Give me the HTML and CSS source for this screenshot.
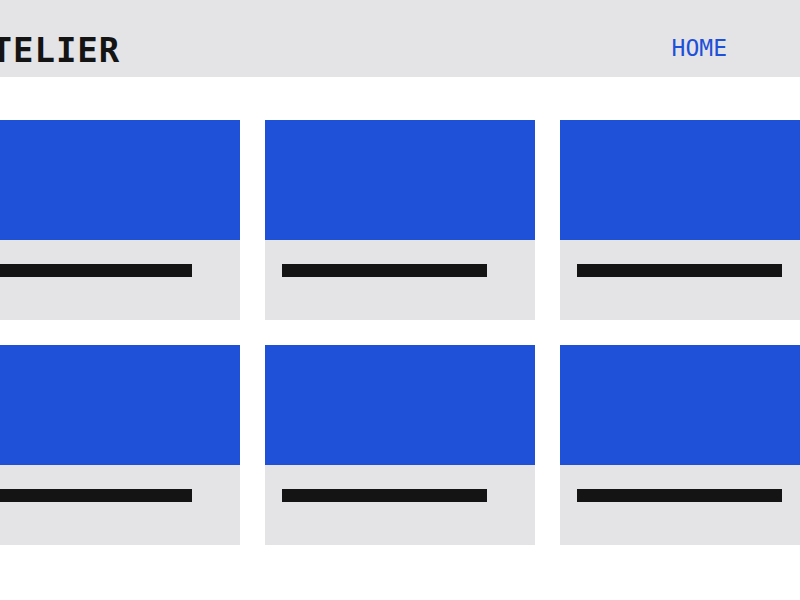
FILE: index.html
```html
<!DOCTYPE html>
<html>
<head>
  <title>Atelier</title>
  <link rel="stylesheet" href="styles.css">
</head>
<body>
  <header class="site-header">
    <div class="header-inner">
      <span class="logo">ATELIER</span>
      <nav class="nav">
        <a class="nav-link" href="#">HOME</a>
      </nav>
    </div>
  </header>

  <main class="gallery">
    <div class="grid">
      <div class="card"><div class="card-image"></div><div class="card-body"><div class="card-title"></div></div></div>
      <div class="card"><div class="card-image"></div><div class="card-body"><div class="card-title"></div></div></div>
      <div class="card"><div class="card-image"></div><div class="card-body"><div class="card-title"></div></div></div>
      <div class="card"><div class="card-image"></div><div class="card-body"><div class="card-title"></div></div></div>
      <div class="card"><div class="card-image"></div><div class="card-body"><div class="card-title"></div></div></div>
      <div class="card"><div class="card-image"></div><div class="card-body"><div class="card-title"></div></div></div>
    </div>
  </main>
</body>
</html>
```

FILE: styles.css
```css
body {
  margin: 0;
  background-color: #ffffff;
  font-family: "DejaVu Sans Mono", monospace;
  overflow: hidden;
}

.site-header {
  height: 77px;
  box-sizing: border-box;
  padding-top: 33px;
  background-color: #e4e4e6;
  display: flex;
  justify-content: center;
}

.header-inner {
  width: 860px;
  flex-shrink: 0;
  display: flex;
  justify-content: space-between;
  align-items: flex-start;
}

.logo {
  font-size: 34px;
  line-height: 34px;
  font-weight: bold;
  letter-spacing: 1px;
  color: #141414;
}

.nav {
  margin-top: 4px;
  margin-right: 103px;
}

.nav-link {
  font-size: 23px;
  line-height: 23px;
  color: #1f50d8;
  text-decoration: none;
}

.gallery {
  padding-top: 43px;
  display: flex;
  justify-content: center;
}

.grid {
  flex-shrink: 0;
  display: grid;
  grid-template-columns: repeat(3, 270px);
  gap: 25px;
}

.card {
  background-color: #e4e4e6;
}

.card-image {
  height: 120px;
  background-color: #1f50d8;
}

.card-body {
  height: 80px;
  padding: 24px 0 0 17px;
  box-sizing: border-box;
}

.card-title {
  width: 205px;
  height: 13px;
  background-color: #141414;
}
```
